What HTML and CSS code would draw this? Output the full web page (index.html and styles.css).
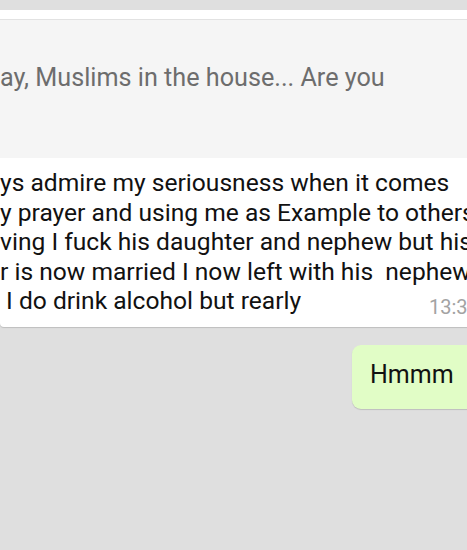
FILE: index.html
```html
<!DOCTYPE html>
<html>
<head>
<meta charset="utf-8">
<link rel="stylesheet" href="styles.css">
</head>
<body>
<div class="chat">
  <div class="bubble in">
    <div class="quote">
      <p class="quote-text">ay, Muslims in the house... Are you</p>
    </div>
    <div class="msg">
      <span class="line">ys admire my seriousness when it comes</span>
      <span class="line">y prayer and using me as Example to others</span>
      <span class="line">ving I fuck his daughter and nephew but his</span>
      <span class="line">r is now married I now left with his&nbsp; nephew</span>
      <div class="last">
        <span class="line">&nbsp;I do drink alcohol but rearly</span>
        <span class="time">13:3</span>
      </div>
    </div>
  </div>
  <div class="row-out">
    <div class="bubble out">Hmmm</div>
  </div>
</div>
</body>
</html>
```

FILE: styles.css
```css
html, body {
  margin: 0;
  padding: 0;
}
body {
  width: 467px;
  height: 550px;
  overflow: hidden;
  background: #dfdfdf;
  font-family: Roboto, "Noto Sans", sans-serif;
}
.chat {
  padding-top: 10px;
  display: flex;
  flex-direction: column;
}
.bubble.in {
  background: #ffffff;
  width: 540px;
  padding-top: 9px;
  box-shadow: 0 1px 1px rgba(0,0,0,0.15);
  border-radius: 0 0 4px 4px;
  height: 317px;
  box-sizing: border-box;
}
.quote {
  background: #f5f5f5;
  border-top: 1px solid #e2e2e2;
  height: 139px;
  box-sizing: border-box;
  padding-top: 43px;
}
.quote-text {
  margin: 0;
  font-size: 25.2px;
  line-height: 30px;
  color: #6d6d6d;
  white-space: nowrap;
}
.msg {
  padding-top: 10px;
  font-size: 24.6px;
  line-height: 29.5px;
  color: #111111;
  white-space: nowrap;
}
.line {
  display: block;
}
.last {
  display: grid;
  grid-template-columns: 429px auto;
  align-items: baseline;
}
.time {
  font-size: 20px;
  color: #a3a3a3;
  position: relative;
  top: 5px;
}
.row-out {
  display: flex;
  justify-content: flex-end;
  margin-top: 18px;
}
.bubble.out {
  background: #e1fdc6;
  width: 130px;
  margin-right: -15px;
  height: 64px;
  box-sizing: border-box;
  padding: 15px 0 0 18px;
  border-radius: 9px 0 0 9px;
  box-shadow: 0 1px 1px rgba(0,0,0,0.15);
  font-size: 25px;
  line-height: 30px;
  color: #111111;
  white-space: nowrap;
}
```
